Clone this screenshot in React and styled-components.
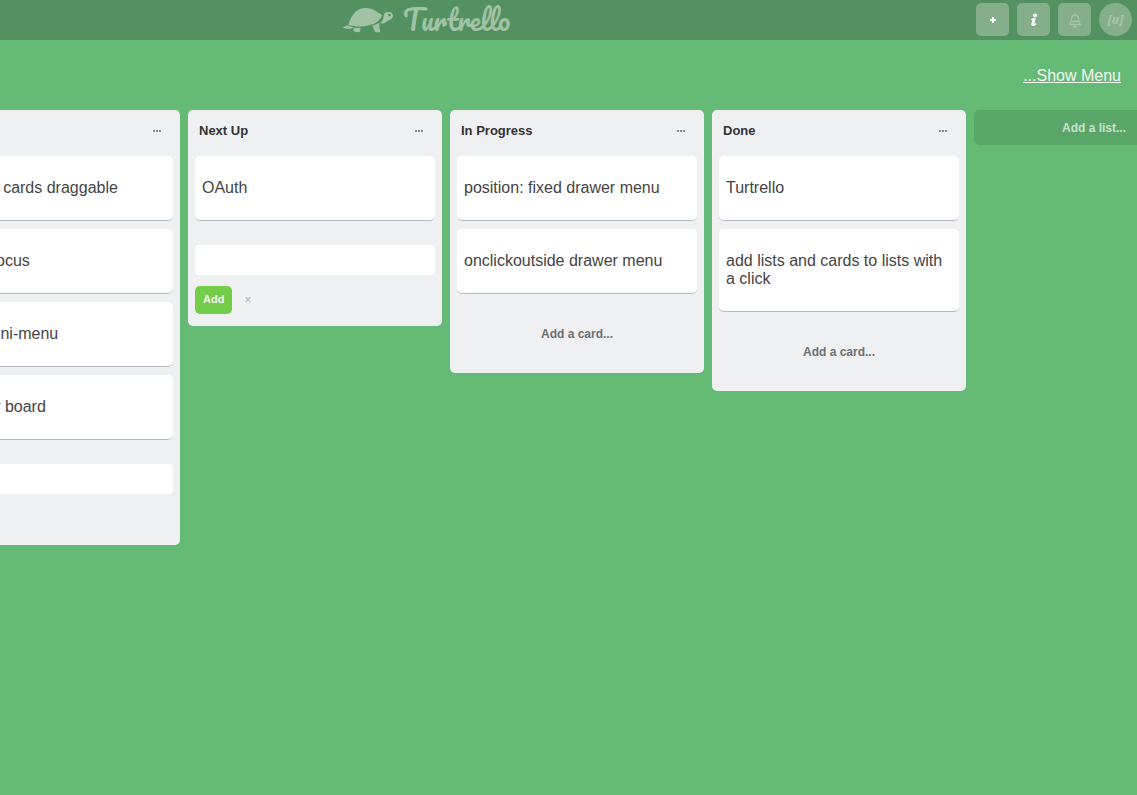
import React, { useLayoutEffect, useRef } from "react";
import styled, { createGlobalStyle } from "styled-components";

const GlobalStyle = createGlobalStyle`
  *, *::before, *::after { box-sizing: border-box; }
  body {
    margin: 0;
    background: #65ba76;
    color: #444;
    font-family: "Liberation Sans", Arial, sans-serif;
    font-size: 16px;
    line-height: 18px;
  }
  button, input { font: inherit; border: 0; margin: 0; }
  button { cursor: pointer; }
`;

const Page = styled.div`
  display: flex;
  flex-direction: column;
  min-height: 100vh;
`;

const Header = styled.header`
  display: flex;
  align-items: center;
  justify-content: space-between;
  height: 40px;
  padding: 0 5px 1px 30%;
  background: #539161;
`;

const Brand = styled.a`
  display: flex;
  align-items: center;
  gap: 9px;
  margin-left: 1px;
  color: #a1c2a5;
  text-decoration: none;
`;

const BrandName = styled.span`
  font-family: Pacifico, cursive;
  font-size: 27px;
  line-height: 32px;
`;

const Toolbar = styled.nav`
  display: flex;
  gap: 8px;
`;

const ToolButton = styled.button`
  display: flex;
  align-items: center;
  justify-content: center;
  width: 33px;
  height: 33px;
  padding: 0;
  border-radius: ${(p) => (p.$round ? "50%" : "5px")};
  background: #85ae8b;
  color: ${(p) => (p.$muted ? "#a5c4a9" : "#fff")};
`;

const Monogram = styled.span`
  font-family: "Open Sans", sans-serif;
  font-size: 12px;
  font-style: italic;
  font-weight: 800;
`;

const BoardBar = styled.div`
  display: flex;
  align-items: center;
  justify-content: flex-end;
  height: 70px;
  padding: 2px 16px 0;
`;

const MenuLink = styled.a`
  color: #f4f4f4;
`;

const Board = styled.main`
  display: flex;
  flex: 1;
  align-items: flex-start;
  gap: 8px;
  padding: 0 8px;
  overflow-x: auto;
  scrollbar-width: none;
`;

const List = styled.section`
  flex: 0 0 254px;
  padding: 0 7px;
  border-radius: 5px;
  background: #eff0f2;
`;

const ListHeader = styled.header`
  display: flex;
  align-items: center;
  justify-content: space-between;
  height: 46px;
  padding: 0 8px 4px 4px;
`;

const ListTitle = styled.h2`
  margin: 0;
  color: #333;
  font-size: 13px;
  font-weight: 700;
`;

const ListMenu = styled.button`
  display: flex;
  padding: 4px;
  background: none;
  color: #8a8a8a;
`;

const Cards = styled.ul`
  display: flex;
  flex-direction: column;
  gap: 8px;
  margin: 0;
  padding: 0;
  list-style: none;
`;

const Card = styled.li`
  padding: 23px 7px;
  border-bottom: 1px solid #b3b9bf;
  border-radius: 5px;
  background: #fff;
`;

const AddCard = styled.button`
  display: block;
  width: 100%;
  height: 79px;
  background: none;
  color: #6f6f6f;
  font-size: 12px;
  font-weight: 700;
`;

const CardForm = styled.form`
  padding: 24px 0 12px;
`;

const CardInput = styled.input`
  display: block;
  width: 100%;
  height: 30px;
  padding: 0 7px;
  border-radius: 4px;
  background: #fff;
`;

const FormActions = styled.div`
  display: flex;
  align-items: center;
  gap: 8px;
  padding-top: 11px;
`;

const AddButton = styled.button`
  height: 28px;
  padding: 0 8px 2px;
  border-radius: 5px;
  background: #74cc4b;
  color: #f1f6ee;
  font-size: 11px;
  font-weight: 700;
`;

const CancelButton = styled.button`
  padding: 0 4px;
  background: none;
  color: #b0b0b0;
  font-size: 12px;
`;

const AddList = styled.button`
  flex: 0 0 240px;
  height: 35px;
  border-radius: 5px;
  background: #5aa669;
  color: #c9e2cd;
  font-size: 12px;
  font-weight: 700;
`;

const Turtle = () => (
  <svg width="52" height="28" viewBox="36 20 156 84" fill="currentColor" aria-hidden="true">
    <path d="M55 76C59 62 67 47 78 36C90 25 110 23 125 29C138 34 146 42 156 47C154 57 143 68 130 74C106 84 78 83 55 76Z" />
    <path
      fillRule="evenodd"
      d="M149 72C158 66 160 58 161 49C162 41 168 37 176 38C184 38 190 44 189 51C187 61 176 62 170 67C163 72 156 73 149 72ZM178 43a4 4 0 1 0 0 8a4 4 0 1 0 0 -8Z"
    />
    <path d="M38 84C44 82 49 78 55 79L71 84C64 90 50 90 38 84Z" />
    <path d="M72 85L92 86C90 90 91 94 90 98C83 99 78 98 74 97C69 94 69 89 72 85Z" />
    <path d="M127 79C135 77 141 74 147 71C150 79 146 87 151 94L150 99H136C134 92 130 87 127 79Z" />
  </svg>
);

const PlusIcon = () => (
  <svg width="8" height="8" viewBox="0 0 8 8" fill="none" stroke="currentColor" strokeWidth="2" aria-hidden="true">
    <path d="M4 1V7M1 4H7" />
  </svg>
);

const InfoIcon = () => (
  <svg width="8" height="14" viewBox="0 0 8 14" fill="currentColor" aria-hidden="true">
    <circle cx="5" cy="2.4" r="1.9" />
    <path d="M1 6.2C2.6 5.1 4.1 4.8 5.7 5L4.4 10.4C4.3 11.2 5.4 10.7 6 10.1L6.4 10.9C5.2 12.3 3.8 13.2 2.3 12.9C1.2 12.7 1.1 11.7 1.4 10.6L2.4 6.9L1.2 7.1Z" />
  </svg>
);

const BellIcon = () => (
  <svg width="14" height="16" viewBox="0 0 14 16" fill="none" stroke="currentColor" strokeWidth="1.3" aria-hidden="true">
    <path d="M7 1.5V3M1.5 12.5H12.5C10.7 11 10.8 9 10.6 7C10.4 4.4 9.2 3 7 3C4.8 3 3.6 4.4 3.4 7C3.2 9 3.3 11 1.5 12.5ZM3.4 9.5H10.6M5.7 14Q7 15.6 8.3 14" strokeLinejoin="round" />
  </svg>
);

const Dots = () => (
  <svg width="8" height="2" viewBox="0 0 8 2" fill="currentColor" aria-hidden="true">
    <path d="M0 0H2V2H0ZM3 0H5V2H3ZM6 0H8V2H6Z" />
  </svg>
);

const lists = [
  {
    title: "To Do",
    adding: true,
    cards: ["lists and cards draggable", "fix autofocus", "cards mini-menu", "scroll for board"],
  },
  { title: "Next Up", adding: true, cards: ["OAuth"] },
  { title: "In Progress", cards: ["position: fixed drawer menu", "onclickoutside drawer menu"] },
  { title: "Done", cards: ["Turtrello", "add lists and cards to lists with a click"] },
];

const NewCardForm = ({ list }) => (
  <CardForm onSubmit={(e) => e.preventDefault()}>
    <CardInput type="text" aria-label={`New card in ${list}`} />
    <FormActions>
      <AddButton type="submit">Add</AddButton>
      <CancelButton type="button" aria-label="Cancel">×</CancelButton>
    </FormActions>
  </CardForm>
);

export default function App() {
  const board = useRef(null);

  // The board opens scrolled past the start of its first list.
  useLayoutEffect(() => {
    board.current.scrollLeft = 82;
  }, []);

  return (
    <Page>
      <GlobalStyle />
      <Header>
        <Brand href="#">
          <Turtle />
          <BrandName>Turtrello</BrandName>
        </Brand>
        <Toolbar>
          <ToolButton type="button" aria-label="Create"><PlusIcon /></ToolButton>
          <ToolButton type="button" aria-label="Information"><InfoIcon /></ToolButton>
          <ToolButton type="button" aria-label="Notifications" $muted><BellIcon /></ToolButton>
          <ToolButton type="button" $muted $round><Monogram>[u]</Monogram></ToolButton>
        </Toolbar>
      </Header>
      <BoardBar>
        <MenuLink href="#menu">...Show Menu</MenuLink>
      </BoardBar>
      <Board ref={board}>
        {lists.map((list) => (
          <List key={list.title}>
            <ListHeader>
              <ListTitle>{list.title}</ListTitle>
              <ListMenu type="button" aria-label={`${list.title} actions`}><Dots /></ListMenu>
            </ListHeader>
            <Cards>
              {list.cards.map((text) => <Card key={text}>{text}</Card>)}
            </Cards>
            {list.adding ? <NewCardForm list={list.title} /> : <AddCard type="button">Add a card...</AddCard>}
          </List>
        ))}
        <AddList type="button">Add a list...</AddList>
      </Board>
    </Page>
  );
}
